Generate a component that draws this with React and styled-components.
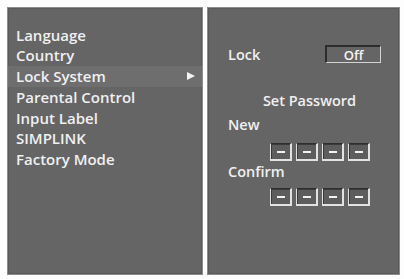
import React from "react";
import styled, { createGlobalStyle } from "styled-components";

const Global = createGlobalStyle`
  html, body { margin: 0; padding: 0; background: #ffffff; }
  body { width: 404px; height: 279px; overflow: hidden; font-family: "Open Sans", "DejaVu Sans", sans-serif; }
`;

const Screen = styled.div`
  display: flex;
  gap: 4px;
  padding: 7px 4px 4px 7px;
  width: 404px;
  height: 279px;
  box-sizing: border-box;
  background: #fdfdfd;
`;

const Panel = styled.div`
  width: ${(p) => p.$w}px;
  height: 268px;
  box-sizing: border-box;
  background: #656565;
  border: 1px solid #8c8c8c;
  box-shadow: inset 0 0 0 1px #5a5a5a;
  display: flex;
  flex-direction: column;
  color: #f0f0f0;
  font-weight: 600;
  font-size: ${(p) => p.$fs}px;
`;

const Menu = styled.div`
  display: flex;
  flex-direction: column;
  padding-top: 16.5px;
`;

const MenuItem = styled.div`
  height: 20.8px;
  line-height: 20.8px;
  padding: 0 0 0 8px;
  display: flex;
  align-items: center;
  justify-content: space-between;
  background: ${(p) => (p.$active ? "#6e6e6e" : "transparent")};
`;

const Arrow = styled.span`
  width: 0;
  height: 0;
  border-top: 4.5px solid transparent;
  border-bottom: 4.5px solid transparent;
  border-left: 8px solid #f4f4f4;
  margin-right: 7px;
`;

const Content = styled.div`
  display: flex;
  flex-direction: column;
  padding: 37px 18px 0 20px;
`;

const Row = styled.div`
  display: flex;
  align-items: center;
  justify-content: space-between;
  height: 18px;
`;

const Label = styled.div`
  height: 18px;
  line-height: 18px;
  margin-top: ${(p) => p.$mt || 0}px;
  text-align: ${(p) => (p.$center ? "center" : "left")};
  padding-left: ${(p) => (p.$center ? 10 : 0)}px;
`;

const ValueBox = styled.div`
  width: 56px;
  height: 18px;
  box-sizing: border-box;
  border-top: 2px solid #2c2c2c;
  border-left: 2px solid #2c2c2c;
  border-bottom: 1px solid #d4d4d4;
  border-right: 1px solid #d4d4d4;
  display: flex;
  align-items: center;
  justify-content: center;
  font-size: 13px;
  font-weight: 600;
  color: #f6f6f6;
`;

const DigitRow = styled.div`
  display: flex;
  gap: 4px;
  padding-left: 42px;
  margin-top: ${(p) => p.$mt || 0}px;
`;

const Digit = styled.div`
  width: 22px;
  height: 18px;
  box-sizing: border-box;
  background: #5d5d5d;
  border-top: 1px solid #2e2e2e;
  border-left: 1px solid #e0e0e0;
  border-bottom: 2px solid #e2e2e2;
  border-right: 2px solid #e2e2e2;
  box-shadow: inset 1px 1px 0 #3a3a3a;
  display: flex;
  align-items: center;
  justify-content: center;
`;

const Dash = styled.span`
  width: 8px;
  height: 2px;
  background: #f2f2f2;
`;

const menu = [
  "Language",
  "Country",
  "Lock System",
  "Parental Control",
  "Input Label",
  "SIMPLINK",
  "Factory Mode",
];

const Digits = ({ mt }) => (
  <DigitRow $mt={mt}>
    {[0, 1, 2, 3].map((i) => (
      <Digit key={i}>
        <Dash />
      </Digit>
    ))}
  </DigitRow>
);

export default function App() {
  return (
    <>
      <Global />
      <Screen>
        <Panel $w={196} $fs={15}>
          <Menu>
            {menu.map((m) => (
              <MenuItem key={m} $active={m === "Lock System"}>
                <span>{m}</span>
                {m === "Lock System" && <Arrow />}
              </MenuItem>
            ))}
          </Menu>
        </Panel>
        <Panel $w={193} $fs={14.5}>
          <Content>
            <Row>
              <span>Lock</span>
              <ValueBox>Off</ValueBox>
            </Row>
            <Label $center $mt={29}>Set Password</Label>
            <Label $mt={6}>New</Label>
            <Digits mt={9} />
            <Label $mt={2}>Confirm</Label>
            <Digits mt={7} />
          </Content>
        </Panel>
      </Screen>
    </>
  );
}
